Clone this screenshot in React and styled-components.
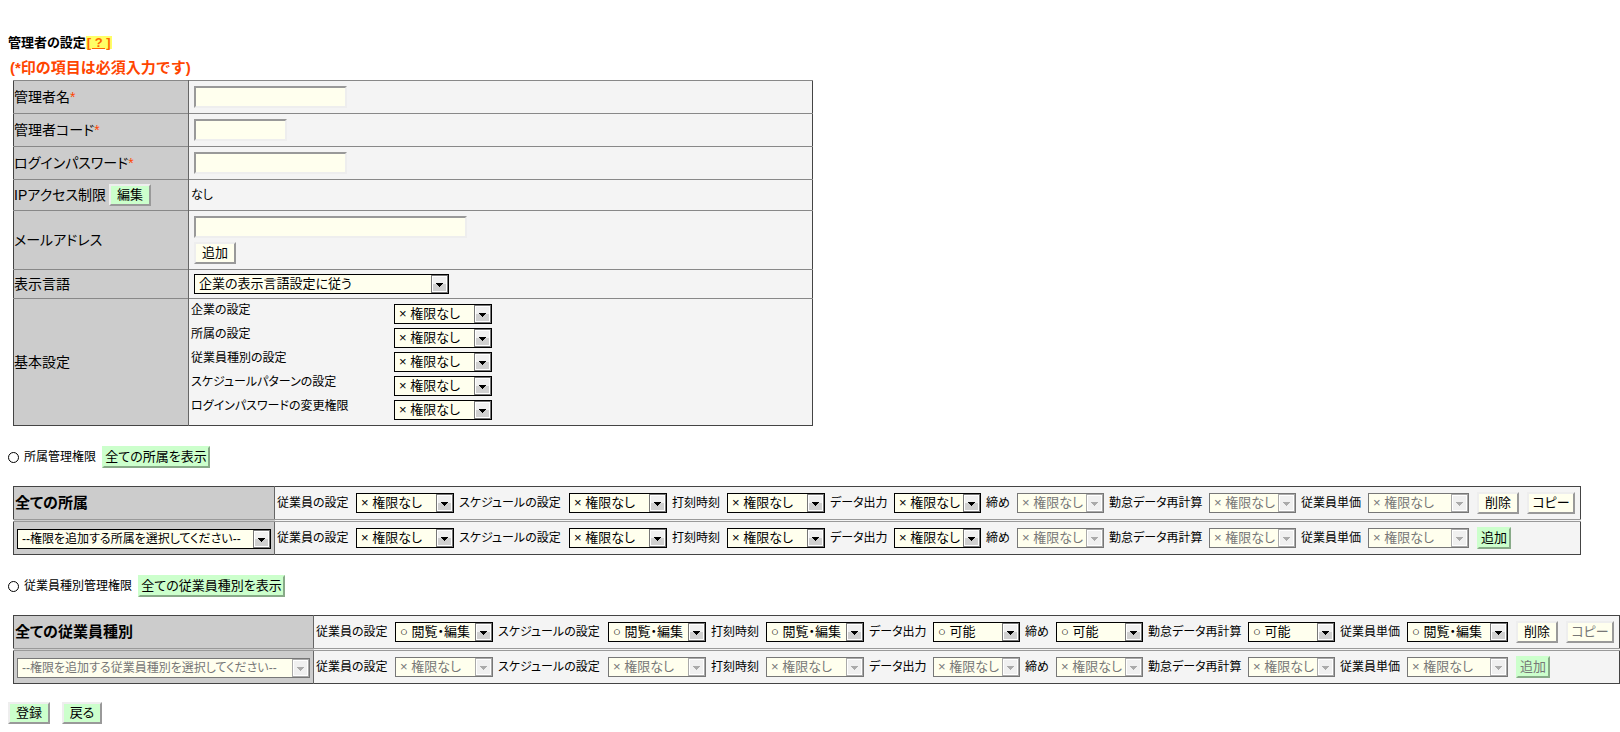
import { useState } from 'react';
import styled, { createGlobalStyle, css } from 'styled-components';

const GlobalStyle = createGlobalStyle`
  * {
    box-sizing: border-box;
  }

  body {
    margin: 0;
    background: white;
    color: black;
  }

  body, input, select, button {
    font-family: "Liberation Sans", "Noto Sans CJK JP", sans-serif;
    font-feature-settings: "palt";
  }
`

const Page = styled.main`
  display: flex;
  flex-direction: column;
  align-items: flex-start;
  padding: 34px 0 0 8px;
`

const PageTitle = styled.h1`
  margin: 0;
  font-size: 13px;
  line-height: 18px;
  font-weight: 700;
`

const HelpLink = styled.a`
  display: inline-block;
  line-height: 13px;
  padding: 0 1px;
  white-space: pre;
  background: #ffff66;
  color: #ff6600;
`

const RequiredNote = styled.p`
  margin: 6px 0 2px 2px;
  font-size: 15px;
  line-height: 20px;
  font-weight: 700;
  font-feature-settings: normal;
  color: orangered;
`

const RequiredSign = styled.span`
  color: orangered;
`

const Table = styled.table`
  margin-left: 5px;
  border-collapse: collapse;
  border: 1px solid #444;
`

const SettingsTable = styled(Table)`
  width: 800px;
`

const SettingsRow = styled.tr`
  height: ${props => props.$height}px;
  border-top: 1px solid #888;
`

const SettingsHead = styled.th`
  width: 175px;
  padding: 0;
  border-right: 1px solid #666;
  background: #ccc;
  font-size: 14px;
  line-height: 20px;
  font-weight: 400;
  text-align: left;
`

const SettingsCell = styled.td`
  padding: 0 2px;
  background: #f4f4f4;
  font-size: 12px;
  line-height: 16px;
`

const HeadContent = styled.div`
  display: flex;
  align-items: center;
  gap: 3px;
`

const Controls = styled.div`
  display: flex;
  flex-direction: column;
  align-items: flex-start;
  gap: 4px;
  padding: 0 3px;
`

const TextInput = styled.input`
  width: ${props => props.$width}px;
  height: 22px;
  padding: 1px 2px;
  border: 2px solid;
  border-color: #999 #eee #eee #999;
  background: #ffffee;
  font-size: 13px;
`

const Button = styled.button`
  height: 22px;
  min-width: ${props => props.$width}px;
  padding: 0;
  border: 2px solid;
  border-color: #eee #999 #999 #eee;
  background: ${props => (props.$green ? '#ccffcc' : '#ffffee')};
  color: black;
  font-size: 13px;
  line-height: 18px;
  white-space: nowrap;

  &:disabled {
    color: #777;
  }

  ${props => props.$flat && css`
    border-color: #ccffcc #88aa88 #88aa88 #ccffcc;
  `}
`

const SelectBox = styled.span`
  display: inline-grid;
  flex: none;
  align-items: center;
  vertical-align: middle;
  width: ${props => props.$width}px;
  height: 20px;
`

const NativeSelect = styled.select`
  grid-area: 1 / 1;
  appearance: none;
  width: 100%;
  height: 20px;
  padding: 0 17px 0 4px;
  border: 1px solid black;
  border-radius: 0;
  background: #ffffee;
  color: black;
  font-size: ${props => (props.$small ? 12 : 13)}px;
  line-height: 18px;

  &:disabled {
    border-color: #777;
    color: #777;
    opacity: 1;
  }
`

const ArrowIcon = styled.svg`
  grid-area: 1 / 1;
  justify-self: end;
  margin-right: 1px;
  pointer-events: none;
`

const BasicRow = styled.div`
  display: grid;
  grid-template-columns: 203px auto;
  justify-content: start;
  height: 24px;
`

const BasicLabel = styled.label`
  line-height: 16px;
`

const BasicSelect = styled.div`
  display: flex;
  padding-top: 2px;
`

const SectionLine = styled.div`
  display: flex;
  align-items: center;
  height: 22px;
  margin: 20px 0 18px;
`

const Radio = styled.input`
  appearance: none;
  width: 11px;
  height: 11px;
  margin: 0;
  border: 1px solid black;
  border-radius: 50%;
  background: white;

  &:checked {
    background: radial-gradient(black 3px, white 3px);
  }
`

const RadioLabel = styled.label`
  margin: 0 6px 0 5px;
  font-size: 12px;
  line-height: 16px;
`

const RightsRow = styled.tr`
  height: 34px;

  & + & {
    border-top: 3px double #999;
  }
`

const RightsHead = styled.th`
  padding: 0 3px 0 ${props => (props.$title ? 1 : 3)}px;
  border-right: 1px solid #666;
  background: #ccc;
  font-size: 15px;
  line-height: 20px;
  text-align: left;
`

const RightsCell = styled.td`
  padding: 0 5px 0 2px;
  background: #f4f4f4;
`

const RightsFields = styled.div`
  display: flex;
  align-items: center;
  font-size: 12px;
  line-height: 16px;
`

const FieldLabel = styled.label`
  flex: none;
  width: ${props => props.$width}px;
  margin-right: 8px;
  white-space: nowrap;

  span + & {
    margin-left: 5px;
  }
`

const RowButtons = styled.div`
  display: flex;
  gap: 8px;
  margin-left: 8px;
`

const FooterButtons = styled.div`
  display: flex;
  gap: 12px;
  margin-top: 18px;
`

const NONE = '× 権限なし';
const EDIT = '○ 閲覧・編集';
const ALLOWED = '○ 可能';

const basicSettings = [
  '企業の設定',
  '所属の設定',
  '従業員種別の設定',
  'スケジュールパターンの設定',
  'ログインパスワードの変更権限',
];

const rightsFields = [
  { label: '従業員の設定', labelWidth: 71, width: 98, full: EDIT },
  { label: 'スケジュールの設定', labelWidth: 102, width: 98, full: EDIT },
  { label: '打刻時刻', labelWidth: 47, width: 98, full: EDIT },
  { label: 'データ出力', labelWidth: 56, width: 87, full: ALLOWED },
  { label: '締め', labelWidth: 23, width: 87, full: ALLOWED },
  { label: '勤怠データ再計算', labelWidth: 92, width: 87, full: ALLOWED },
  { label: '従業員単価', labelWidth: 59, width: 101, full: EDIT },
];

function Select({ id, width, value, disabled, label, small }) {
  const arrow = disabled ? '#aaa' : 'black';
  const shade = disabled ? '#f0f0f0' : '#d0d0d0';
  const edge = disabled ? '#aaa' : '#777';

  return (
    <SelectBox $width={width}>
      <NativeSelect id={id} disabled={disabled} aria-label={label} $small={small}>
        <option>{value}</option>
      </NativeSelect>
      <ArrowIcon width="17" height="18" viewBox="0 0 17 18" shapeRendering="crispEdges">
        <rect width="17" height="18" fill={edge} />
        <rect x="1" y="1" width="15" height="16" fill="white" />
        <rect x="2" y="2" width="13" height="7" fill="#f0f0f0" />
        <rect x="2" y="9" width="13" height="7" fill={shade} />
        <path d="M5 8h7v1h-1v1h-1v1h-1v1h-1v-1h-1v-1h-1v-1h-1z" fill={arrow} />
      </ArrowIcon>
    </SelectBox>
  )
}

function RightsFieldList({ name, full, disabledFrom, children }) {
  return (
    <RightsFields>
      {rightsFields.map((field, i) => [
        <FieldLabel key={field.label} htmlFor={`${name}-${i}`} $width={field.labelWidth}>
          {field.label}
        </FieldLabel>,
        <Select
          key={`${name}-${i}`}
          id={`${name}-${i}`}
          width={field.width}
          value={full ? field.full : NONE}
          disabled={i >= disabledFrom}
        />,
      ])}
      <RowButtons>{children}</RowButtons>
    </RightsFields>
  )
}

export default function App() {
  const [scope, setScope] = useState('');

  return (
    <>
      <GlobalStyle />
      <Page>
        <PageTitle>管理者の設定<HelpLink href="#help">[ ? ]</HelpLink></PageTitle>
        <RequiredNote>(*印の項目は必須入力です)</RequiredNote>

        <SettingsTable>
          <tbody>
            <SettingsRow $height={33}>
              <SettingsHead><label htmlFor="name">管理者名</label><RequiredSign>*</RequiredSign></SettingsHead>
              <SettingsCell><Controls><TextInput type="text" id="name" $width={153} /></Controls></SettingsCell>
            </SettingsRow>
            <SettingsRow $height={33}>
              <SettingsHead><label htmlFor="code">管理者コード</label><RequiredSign>*</RequiredSign></SettingsHead>
              <SettingsCell><Controls><TextInput type="text" id="code" $width={93} /></Controls></SettingsCell>
            </SettingsRow>
            <SettingsRow $height={33}>
              <SettingsHead><label htmlFor="password">ログインパスワード</label><RequiredSign>*</RequiredSign></SettingsHead>
              <SettingsCell><Controls><TextInput type="password" id="password" $width={153} /></Controls></SettingsCell>
            </SettingsRow>
            <SettingsRow $height={31}>
              <SettingsHead>
                <HeadContent>IPアクセス制限<Button type="button" $green $width={42}>編集</Button></HeadContent>
              </SettingsHead>
              <SettingsCell>なし</SettingsCell>
            </SettingsRow>
            <SettingsRow $height={59}>
              <SettingsHead><label htmlFor="mail">メールアドレス</label></SettingsHead>
              <SettingsCell>
                <Controls>
                  <TextInput type="email" id="mail" $width={273} />
                  <Button type="button" $width={42}>追加</Button>
                </Controls>
              </SettingsCell>
            </SettingsRow>
            <SettingsRow $height={29}>
              <SettingsHead><label htmlFor="language">表示言語</label></SettingsHead>
              <SettingsCell>
                <Controls><Select id="language" width={255} value="企業の表示言語設定に従う" /></Controls>
              </SettingsCell>
            </SettingsRow>
            <SettingsRow $height={127}>
              <SettingsHead>基本設定</SettingsHead>
              <SettingsCell>
                {basicSettings.map((label, i) => (
                  <BasicRow key={label}>
                    <BasicLabel htmlFor={`basic-${i}`}>{label}</BasicLabel>
                    <BasicSelect><Select id={`basic-${i}`} width={98} value={NONE} /></BasicSelect>
                  </BasicRow>
                ))}
              </SettingsCell>
            </SettingsRow>
          </tbody>
        </SettingsTable>

        <SectionLine>
          <Radio type="radio" name="scope" id="scope-section" checked={scope === 'section'} onChange={() => setScope('section')} />
          <RadioLabel htmlFor="scope-section">所属管理権限</RadioLabel>
          <Button type="button" $green $flat $width={108}>全ての所属を表示</Button>
        </SectionLine>

        <Table>
          <tbody>
            <RightsRow>
              <RightsHead $title>全ての所属</RightsHead>
              <RightsCell>
                <RightsFieldList name="section-all" disabledFrom={4}>
                  <Button type="button" $width={42}>削除</Button>
                  <Button type="button" $width={48}>コピー</Button>
                </RightsFieldList>
              </RightsCell>
            </RightsRow>
            <RightsRow>
              <RightsHead>
                <Select width={254} value="--権限を追加する所属を選択してください--" label="所属" small />
              </RightsHead>
              <RightsCell>
                <RightsFieldList name="section-new" disabledFrom={4}>
                  <Button type="button" $green $flat $width={34}>追加</Button>
                </RightsFieldList>
              </RightsCell>
            </RightsRow>
          </tbody>
        </Table>

        <SectionLine>
          <Radio type="radio" name="scope" id="scope-type" checked={scope === 'type'} onChange={() => setScope('type')} />
          <RadioLabel htmlFor="scope-type">従業員種別管理権限</RadioLabel>
          <Button type="button" $green $flat $width={147}>全ての従業員種別を表示</Button>
        </SectionLine>

        <Table>
          <tbody>
            <RightsRow>
              <RightsHead $title>全ての従業員種別</RightsHead>
              <RightsCell>
                <RightsFieldList name="type-all" full disabledFrom={7}>
                  <Button type="button" $width={42}>削除</Button>
                  <Button type="button" $width={48} disabled>コピー</Button>
                </RightsFieldList>
              </RightsCell>
            </RightsRow>
            <RightsRow>
              <RightsHead>
                <Select width={293} value="--権限を追加する従業員種別を選択してください--" label="従業員種別" disabled small />
              </RightsHead>
              <RightsCell>
                <RightsFieldList name="type-new" disabledFrom={0}>
                  <Button type="button" $green $flat $width={34} disabled>追加</Button>
                </RightsFieldList>
              </RightsCell>
            </RightsRow>
          </tbody>
        </Table>

        <FooterButtons>
          <Button type="submit" $green $width={42}>登録</Button>
          <Button type="button" $green $width={40}>戻る</Button>
        </FooterButtons>
      </Page>
    </>
  )
}
